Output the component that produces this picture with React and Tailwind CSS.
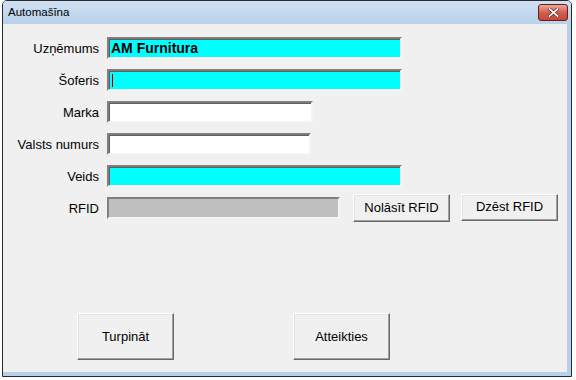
import React from 'react';

const Field = ({ label, width, bg = 'bg-white', children }) => (
  <div className="flex items-center h-[22px]">
    <div className="w-[96px] text-right text-[13px] text-black leading-none">{label}</div>
    <div
      className={`ml-[8px] h-[22px] ${width} ${bg} border-2 border-t-[#7f7f7f] border-l-[#7f7f7f] border-b-[#f4f4f4] border-r-[#f4f4f4] shadow-[inset_1px_1px_0_#5f5f5f] flex items-center pl-[2px]`}
    >
      {children}
    </div>
  </div>
);

const WinButton = ({ children, className }) => (
  <button
    className={`bg-[#f0f0f0] border border-t-white border-l-white border-r-[#696969] border-b-[#696969] shadow-[inset_-1px_-1px_0_#a0a0a0,inset_1px_1px_0_#e3e3e3] text-[13px] text-black flex items-center justify-center ${className}`}
  >
    {children}
  </button>
);

export default function App() {
  return (
    <div className="w-[576px] h-[380px] bg-white font-['Liberation_Sans',Arial,sans-serif]">
      <div className="ml-[2px] w-[570px] h-[377px] flex flex-col border border-[#2a2a2a] rounded-t-[5px] overflow-hidden">
        {/* Title bar */}
        <div className="h-[23px] shrink-0 flex items-center justify-between bg-gradient-to-b from-[#cfe0f3] to-[#b9d1ea] pl-[5px] pr-[3px]">
          <span className="text-[11.5px] text-black">Automašīna</span>
          <div className="w-[30px] h-[17px] mb-[1px] rounded-[3px] border border-[#6b1e16] bg-gradient-to-b from-[#e9a899] via-[#d2604f] to-[#c4483a] flex items-center justify-center">
            <svg width="11" height="9" viewBox="0 0 11 9">
              <path d="M1.5 1 L9.5 8 M9.5 1 L1.5 8" stroke="#5a1a12" strokeWidth="3.2" strokeLinecap="square" />
              <path d="M1.5 1 L9.5 8 M9.5 1 L1.5 8" stroke="white" strokeWidth="1.8" strokeLinecap="square" />
            </svg>
          </div>
        </div>

        {/* Content */}
        <div className="flex-1 flex flex-col bg-[#f0f0f0] border-r-[4px] border-b-[4px] border-[#b7d1ec]">
          <div className="flex flex-col gap-[10px] pt-[13px]">
            <Field label="Uzņēmums" width="w-[295px]" bg="bg-[#00ffff]">
              <span className="text-[14px] font-bold text-black leading-none">AM Furnitura</span>
            </Field>
            <Field label="Šoferis" width="w-[295px]" bg="bg-[#00ffff]">
              <span className="w-px h-[13px] bg-black ml-[1px]" />
            </Field>
            <Field label="Marka" width="w-[206px]" />
            <Field label="Valsts numurs" width="w-[204px]" />
            <Field label="Veids" width="w-[295px]" bg="bg-[#00ffff]" />
            <div className="flex items-center h-[22px]">
              <div className="w-[96px] text-right text-[13px] text-black leading-none">RFID</div>
              <div className="ml-[8px] h-[22px] w-[233px] bg-[#bfbfbf] border-2 border-t-[#7f7f7f] border-l-[#7f7f7f] border-b-[#f4f4f4] border-r-[#f4f4f4]" />
              <WinButton className="ml-[13px] w-[97px] h-[28px]">Nolāsīt RFID</WinButton>
              <WinButton className="ml-[11px] w-[97px] h-[27px] -mt-[2px]">Dzēst RFID</WinButton>
            </div>
          </div>

          <div className="flex mt-[94px] pl-[74px]">
            <WinButton className="w-[97px] h-[47px]">Turpināt</WinButton>
            <WinButton className="ml-[119px] w-[97px] h-[47px]">Atteikties</WinButton>
          </div>
        </div>
      </div>
    </div>
  );
}
